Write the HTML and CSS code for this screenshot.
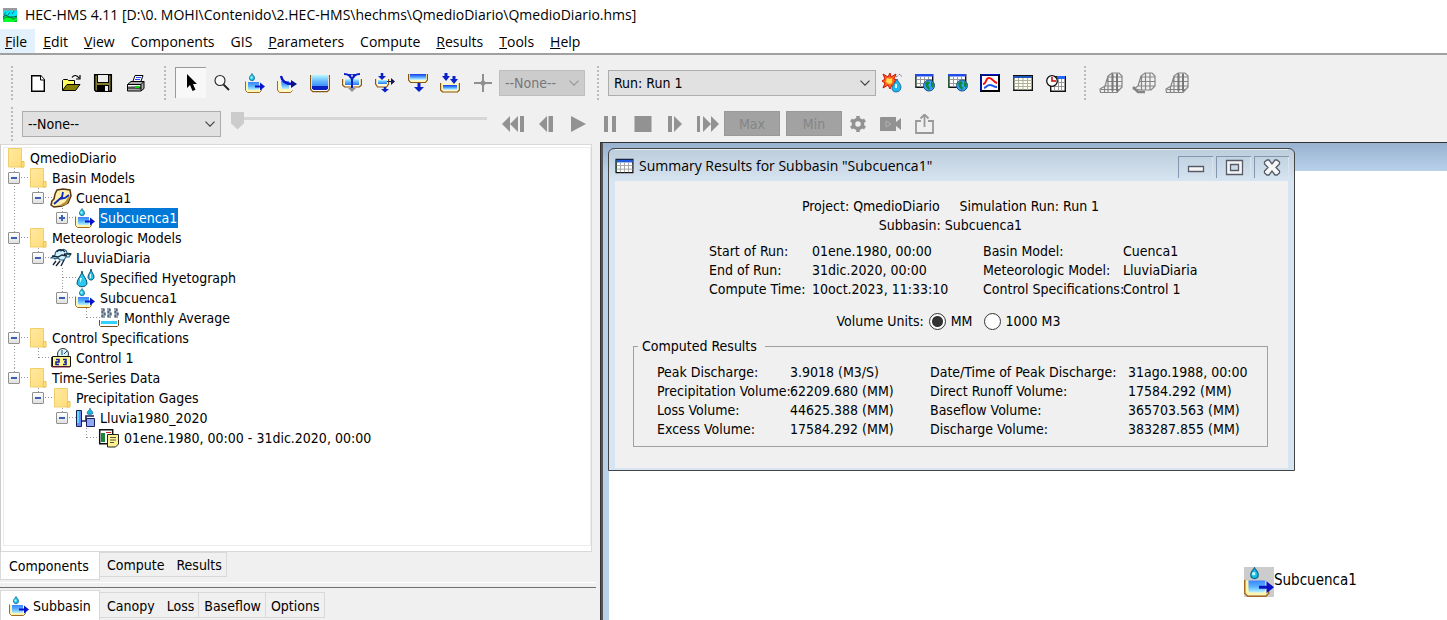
FILE: index.html
```html
<!DOCTYPE html>
<html lang="en">
<head>
<meta charset="utf-8">
<title>HEC-HMS 4.11</title>
<link rel="stylesheet" href="styles.css">
</head>
<body>
<svg class="sprite" aria-hidden="true">
  <defs>
    <linearGradient id="water" x1="0" y1="0" x2="0" y2="1"><stop offset="0" stop-color="#b8f8ff"/><stop offset=".5" stop-color="#5ab0ff"/><stop offset="1" stop-color="#2a7af8"/></linearGradient>
    <linearGradient id="deep" x1="0" y1="0" x2="0" y2="1"><stop offset="0" stop-color="#1838e8"/><stop offset=".5" stop-color="#4aa0ff"/><stop offset="1" stop-color="#d8fcff"/></linearGradient>
    <linearGradient id="basin-water" x1="0" y1="0" x2="0" y2="1"><stop offset="0" stop-color="#3a86ff"/><stop offset=".5" stop-color="#58b0ff"/><stop offset="1" stop-color="#b8f4ff"/></linearGradient>
    <linearGradient id="paper" x1="0" y1="0" x2="1" y2="1"><stop offset="0" stop-color="#ffe9a0"/><stop offset="1" stop-color="#ffdc78"/></linearGradient>
  </defs>
  <symbol id="logo" viewBox="0 0 14 14"><path fill="#00e8f8" d="M0 0h14v14H0z"/><path fill="#9a9a9a" d="M0 0h14v2l-3 1-3-1-3 1-5-1z"/><path stroke="#177" d="M3 4 1 7M7 4 5 7M11 3 9 6"/><path fill="#0b2" d="M0 10 3 8l4 1 4 1 3-2v6H0z"/><path stroke="#053" fill="none" d="M0 9l3-2 3 2h5l3-1"/><path fill="#0f3" d="M3 10h4l3 2 4-2v2l-4 2H0v-2z"/></symbol>
  <symbol id="new" viewBox="0 0 20 20"><path fill="#fff" stroke="#000" stroke-width="1.400" d="M3.700 2.700h9l3.600 4v11.600H3.700z"/><path fill="#fff" stroke="#000" d="M12.500 2.500v4.500h4"/></symbol>
  <symbol id="open" viewBox="0 0 20 20"><path fill="#ffff60" stroke="#000" d="M1.500 17V7.500l1-1h4l1 1h6V11"/><path fill="#888000" stroke="#000" d="M1.500 17.500 6 11.500h13l-4.500 6z"/><path fill="none" stroke="#000" stroke-width="1.200" d="M11 4.500c2-3 5-2.500 7 .5M19 2v4h-4"/></symbol>
  <symbol id="save" viewBox="0 0 20 20"><path fill="#807c30" stroke="#000" stroke-width="1.500" d="M1.700 1.700h16.600v16.600H3l-1.300-1.300z"/><path fill="#000" d="M4 2h12v8H4zM4 12h12v7H4z"/><path fill="#eee" d="M5 2h10v7H5zM12 13h3v5h-3z"/></symbol>
  <symbol id="print" viewBox="0 0 20 20"><path fill="#fff" stroke="#000" d="M6.500 9.500 9 2.500h8l-2.500 7z"/><path stroke="#24f" d="M10 4.500h5M9 6.500h5"/><path fill="#aaa" stroke="#000" d="M1.500 11.500 5 8.500h13v7l-3 2.500H1.500z"/><path stroke="#000" d="M1.500 11.500H15v6.500M15 11.500l3-3M2 15h13"/><path fill="#fff" d="M2 12h12v1H2z"/><path fill="#0d0" d="M9 13h4v2H9z"/></symbol>
  <symbol id="pointer" viewBox="0 0 20 20"><path d="M6 1v14l3-3 2.500 6 3-1.200-2.500-5.800h4z"/></symbol>
  <symbol id="zoom" viewBox="0 0 20 20"><circle cx="8" cy="7.500" r="5" fill="#f8f8f8" stroke="#222" stroke-width="1.100"/><path stroke="#222" stroke-width="1.800" d="m11.500 11.500 5.500 5.500"/></symbol>
  <symbol id="basin" viewBox="0 0 20 20"><path fill="#fff4b0" d="M0 9h3l1 7h10l1-2h2v3l-2 2H2l-2-2z"/><path fill="none" stroke="#a06a20" d="M.5 8.500v9l2 2h12l2-2V15"/><path fill="url(#basin-water)" d="M3 9h11v7l-1 1H4l-1-1z"/><path fill="#10c0e8" stroke="#1a6a90" stroke-width=".8" d="M7 .5c1 2 2.500 2.500 2.500 4.500S8.500 7.700 7 7.700 4.500 7 4.500 5 6 2.500 7 .5z"/><path fill="#c8ffff" d="M5.500 3.500h2v2h-2z"/><path fill="#0a12c8" d="M10 12.500h5v-3l5 4-5 4v-3h-5z"/></symbol>
  <symbol id="reach" viewBox="0 0 20 20"><path fill="#fff8c0" d="M0 8h3l1 8h8l3-2v4l-2 1H2l-2-2z"/><path fill="none" stroke="#a06a20" d="M.5 8v9l2 2.500h11l2-2"/><path fill="url(#basin-water)" d="M4 8h8v8H5z"/><path fill="none" stroke="#0a12c8" stroke-width="2.400" d="M4 3c1 5 5 8 11 8"/><path fill="#0a1280" d="m14 7 6 4-6 4z"/></symbol>
  <symbol id="reservoir" viewBox="0 0 20 20"><path fill="#fff" stroke="#8a5410" stroke-width="1.200" d="M.6 2v14.500l2.200 2.200h14.400l2.200-2.200V2"/><path fill="url(#water)" d="M2 2h16v14H2z"/><path fill="#0a20c0" d="M2 13h16v2.500L16.500 17h-13L2 15.500z"/></symbol>
  <symbol id="junction" viewBox="0 0 20 20"><path fill="#fffbd8" stroke="#8a5410" stroke-width="1.200" d="M.6 6v6l2 2h14.800l2-2V6"/><path fill="url(#water)" d="M3 6h14v6H3z"/><path stroke="#0a20c8" stroke-width="2" fill="none" d="M2 1c4 0 7 2 8 6 1-4 4-6 8-6M10 6v10"/><path fill="#0a20c8" d="M5 1h5L8 5zM15 1h-5l2 4z"/><path d="M6 15h8l-4 4z"/></symbol>
  <symbol id="diversion" viewBox="0 0 20 20"><path fill="#fffbd8" stroke="#8a5410" stroke-width="1.200" d="M.6 6v5l2 3h9l2-3V6"/><path fill="url(#water)" d="M3 7h9v4H3z"/><path stroke="#0a20c8" stroke-width="2.500" d="M7 0v4M10 14v3"/><path fill="#0a20c8" d="M3 3h8L7 7zM6 16h8l-4 3.500z"/><path d="M12 8h4V5l4 3.500-4 3.500v-3h-4z" fill="#111850"/></symbol>
  <symbol id="source" viewBox="0 0 20 20"><path fill="#fff8c0" stroke="#8a5410" stroke-width="1.200" d="M.6 1v6l2 2.500h14.800l2-2.500V1"/><path fill="url(#deep)" d="M2 1h16v6H2z"/><path stroke="#0a20c8" stroke-width="3" d="M11 10v5"/><path fill="#0a20c8" d="M6 14h10l-5 5z"/></symbol>
  <symbol id="sink" viewBox="0 0 20 20"><path fill="#fff8c0" stroke="#8a5410" stroke-width="1.200" d="M.6 10v7l2 2h14.800l2-2v-7"/><path fill="url(#deep)" d="M3 12h14v5H3z"/><path stroke="#0a20c8" stroke-width="3" d="M6 0v4M14 3v4"/><path fill="#0a20c8" d="M2 3h8L6 8zM10 6h8l-4 5z"/></symbol>
  <symbol id="cross" viewBox="0 0 20 20"><path fill="#909090" d="M9 1h2v7l1 1h7v2h-7l-1 1v7H9v-7l-1-1H1V9h7l1-1z"/><circle cx="10" cy="10" r="2.500" fill="#909090"/></symbol>
  <symbol id="burst" viewBox="0 0 20 20"><path fill="#ff6a18" stroke="#d01008" d="m1 1 5 3 2-4 1 4 5-3-2 5 3 1-3 2 2 4-4-1-2 4-2-4-5 3 2-5-3-2 3-2z"/><path fill="#ffe050" d="m5 5 3 1 2-1v5l-3 1-3-2z"/><path fill="#20b8f0" stroke="#106090" stroke-width=".8" d="M15 6c1 3 4 5 4 8s-2 5-5 5-4-2-4-4 3-5 5-9z"/><path fill="#d8ffff" d="M13 11h2v4h-2z"/><path fill="none" stroke="#557" stroke-dasharray="1 1" d="m14 4 4-3 2 3"/></symbol>
  <symbol id="sheet" viewBox="0 0 20 20"><path fill="#fff" stroke="#101010" stroke-width="1.400" d="M.7 2.700h18.600v14.600H.7z"/><path fill="#2058e0" d="M1 3h18v3H1z"/><path stroke="#a0a0a0" d="M1 9.500h18M1 13.500h18M5.500 6v11M10 6v11M14.500 6v11" fill="none"/><path stroke="#285838" d="M.6 3v14"/></symbol>
  <symbol id="globe-sheet" viewBox="0 0 20 20"><path fill="#fff" stroke="#101018" stroke-width="1.400" d="M.7 1.700h17v12.600H.7z"/><path fill="#204ce8" d="M0 1h18v2.500H0z"/><path stroke="#9a9a9a" d="M2 6.500h15M2 10.500h15M5.500 4v10M9.500 4v10M13.500 4v10"/><path stroke="#285838" stroke-width="1.500" d="M.7 3v12"/><circle cx="14" cy="12.500" r="5.500" fill="#30a0ff" stroke="#205080"/><path fill="#108838" d="m10 10 3-2 2 2-2 2 2 3-1 2-3-3zM16 8l3 3-1 4-2-2z"/></symbol>
  <symbol id="graph" viewBox="0 0 20 20"><path fill="#fff" stroke="#000" stroke-width="2" d="M1 2h18v16H1z"/><path fill="none" stroke="#0018c8" stroke-width="1.500" d="M1 1.700h18M1 2v16"/><path fill="none" stroke="#f01010" stroke-width="2" d="M3 11c4 0 2-6 6-6 4 0 4 4 8 5"/><path fill="none" stroke="#2058f0" stroke-width="2" d="M4 15c4-1 2-3 6-3 3 0 3 2 7 2"/></symbol>
  <symbol id="table" viewBox="0 0 20 20"><path fill="#fffff0" stroke="#101010" stroke-width="1.400" d="M.7 2.700h18.600v14.600H.7z"/><path fill="#2058c0" d="M1 3h18v2H1z"/><path stroke="#b0b0a0" d="M1 7.500h18M1 10.500h18M1 13.500h18M5.500 5v12M10 5v12M14.500 5v12" fill="none"/><path stroke="#385838" d="M.6 3v14"/></symbol>
  <symbol id="clock-sheet" viewBox="0 0 20 20"><path fill="#fff" stroke="#111" stroke-width="1.400" d="M4.700 3.700h14.600v14.600H4.700z"/><path fill="#2468f0" d="M11 3h8v3h-8z"/><path stroke="#999" d="M5 9.500h14M5 13.500h14M8.500 9v9M12.500 6v12M15.500 6v12"/><circle cx="6" cy="8" r="5.300" fill="#fff" stroke="#111" stroke-width="1.300"/><path fill="none" stroke="#c00" stroke-width="1.500" d="M6 4v4h4"/></symbol>
  <symbol id="terrain" viewBox="0 0 24 22"><path fill="none" stroke="#858585" stroke-width="1.200" d="M1.500 20.500 1 17l5-3 3-10 4-3h7l3 3v11l-5 5.500zM8 5h15M7 9.500h16M6 14h17M2 17.500h18M9 4v16M13.500 1v19M18 1v19M5.500 14v6"/><path stroke="#777" stroke-width="2" d="M13.500 2v17M18 2v17"/></symbol>
  <symbol id="terrain-edit" viewBox="0 0 24 22"><path fill="none" stroke="#858585" stroke-width="1.200" d="M6 14 9 4l4-3h7l3 3v10l-4 4H9l-7-1zM8 5h15M7 9.500h16M6 14h17M9.500 4v14M13.500 1v17M18 1v17"/><path fill="none" stroke="#858585" stroke-width="2.500" d="m1 15 5 5h7"/></symbol>
  <symbol id="first" viewBox="0 0 24 20"><path d="M1 10 9 2v16zM9 10l8-8v16zM19 2h4v16h-4z"/></symbol>
  <symbol id="prev" viewBox="0 0 24 20"><path d="m5 10 8-8v16zM14.500 2H19v16h-4.500z"/></symbol>
  <symbol id="play" viewBox="0 0 24 20"><path d="m5 2 15 8-15 8z"/></symbol>
  <symbol id="pause" viewBox="0 0 24 20"><path d="M6 2h4v16H6zM14 2h4v16h-4z"/></symbol>
  <symbol id="stop" viewBox="0 0 24 20"><path d="M3.500 2h17v16h-17z"/></symbol>
  <symbol id="next" viewBox="0 0 24 20"><path d="M5 2h4v16H5zM11 2l8 8-8 8z"/></symbol>
  <symbol id="last" viewBox="0 0 24 20"><path d="M1 2h3v16H1zM7 2l8 8-8 8zM15 2l8 8-8 8z"/></symbol>
  <symbol id="gear" viewBox="0 0 24 20"><circle cx="12" cy="10" r="4.500" fill="none" stroke="#929292" stroke-width="3.500"/><path fill="none" stroke="#929292" stroke-width="3.500" d="M12 2v3M12 15v3M5 6l3 2M16 12l3 2M5 14l3-2M16 8l3-2"/></symbol>
  <symbol id="camera" viewBox="0 0 24 20"><path d="M1 4q0-1 1-1h15v5l5-4v12l-5-4v5H1z"/><path fill="none" stroke="#b0b0b0" d="m7 7 5 3-5 3z"/></symbol>
  <symbol id="share" viewBox="0 0 24 20"><path fill="none" stroke="#999" stroke-width="1.800" d="M9 7H4v12h17V7h-5M12.500 13V1M8.500 4.500l4-4 4 4"/></symbol>
  <symbol id="folder" viewBox="0 0 22 20"><path fill="url(#paper)" stroke="#f0cf6a" d="M4.500.5h13v13h2v5.500h-15z"/><path fill="#ffdf80" stroke="#eac250" d="M17.500 13.500h2.500V19h-3z"/></symbol>
  <symbol id="map" viewBox="0 0 22 20"><path fill="#fff0b0" stroke="#5a3408" stroke-width="1.500" d="m7 2 6-1 7 1 1 6-3 7-6 3-8 1-3-2 1-4 2-2 1-5z"/><path fill="#b8903c" d="m10 17 5-3 4-6 1 1-3 7-5 2z"/><path fill="none" stroke="#1028b8" stroke-width="1.800" d="m4 16 8-7 1-5M9 11l6-1 4-3"/></symbol>
  <symbol id="cloud" viewBox="0 0 22 20"><path fill="#d0f0ff" stroke="#246080" stroke-width="1.200" d="M4 10H1l4-3c0-4 3-6 6-4 2-3 6-1 6 2l4 1-2 3h-3l-2 3h-4l-2-2-3 1z"/><path fill="none" stroke="#142838" stroke-width="1.300" d="M7 4c1-3 6-3 8 0M2 8l6 1 4-2 5 1M14 6l7 0"/><path stroke="#142838" stroke-width="1.400" d="m6 13-3 4M10 13l-4 5M14 12l-3 6"/></symbol>
  <symbol id="drops" viewBox="0 0 22 20"><path fill="#28c8f0" stroke="#0a5070" d="M8 3c0 4 5 8 5 12 0 5-10 5-10 0 0-4 5-8 5-12zM17 1c0 3 3 5 3 8 0 4-6 4-6 0 0-3 3-5 3-8z"/><path fill="#d8ffff" d="M6 10h2l-2 5zM16 6h1v4h-1z"/></symbol>
  <symbol id="evap" viewBox="0 0 22 20"><path fill="none" stroke="#244060" stroke-width="1.200" d="M3 1h3v2H4v2h3v2H4v2h3M9 1h3v2h-2v2h3v2h-3v2h3M16 1h3v2h-2v2h3v2h-3v2h3"/><path fill="#fff" stroke="#76501c" d="M1.500 12v5.500l1 1h17l1-1V12"/><path fill="#30d0ff" d="M3 13h16v3H3z"/></symbol>
  <symbol id="control" viewBox="0 0 22 20"><circle cx="13" cy="6" r="5.500" fill="#d8f4f8" stroke="#333"/><path fill="none" stroke="#246" d="M12 2v5M14 6l3-3"/><path fill="#fff390" stroke="#111" d="M2.500 8.500h18v10h-18z"/><path stroke="#824" d="M2 19h18M1.500 9v10"/><path fill="none" stroke="#1020a0" stroke-width="1.500" d="M6 11.500h3V14H6v2.500h3M13 11.500h3V14h-2 2v2.500h-3"/></symbol>
  <symbol id="gage" viewBox="0 0 22 20"><path fill="#7088f0" stroke="#182058" d="M2.500 2.500h5v16h-5z"/><path fill="#60d8ff" d="M3 3h2v12H3z"/><path fill="none" stroke="#182058" stroke-width="1.600" d="M7 13h5V8h8"/><path fill="#90a8f8" stroke="#182058" d="M12.500 10.500h8v8h-8z"/><path fill="#18b0e0" stroke="#146" stroke-width=".5" d="M16 0c0 2 3 3 3 5s-6 2-6 0 3-3 3-5z"/></symbol>
  <symbol id="series" viewBox="0 0 22 20"><path fill="#fff" stroke="#111" stroke-width="1.500" d="M1.700 1.700h13v14h-13z"/><path fill="#188838" d="M3 5h4v9H3z"/><path stroke="#c22" d="M8 4.500h5"/><path fill="#fff490" stroke="#222" d="M9.500 6.500h11V16l-3 3h-8z"/><path stroke="#554" d="M12 9.500h6M12 12h6M12 14.500h4"/></symbol>
  <symbol id="chevron" viewBox="0 0 10 6"><path fill="none" stroke="currentColor" stroke-width="1.200" d="m.5.7 4.500 4.500L9.500.7"/></symbol>
</svg>

<header class="title-bar"><svg class="logo"><use href="#logo"/></svg><h1>HEC-HMS 4.11 [D:\0. MOHI\Contenido\2.HEC-HMS\hechms\QmedioDiario\QmedioDiario.hms]</h1></header>
<nav class="menu-bar">
  <button class="active"><u>F</u>ile</button><button><u>E</u>dit</button><button><u>V</u>iew</button><button>Components</button><button>GIS</button><button><u>P</u>arameters</button><button>Compute</button><button><u>R</u>esults</button><button><u>T</u>ools</button><button><u>H</u>elp</button>
</nav>

<div class="toolbars">
  <div class="toolbar" role="toolbar" aria-label="Tools">
    <span class="grip"></span>
    <div class="tools four">
      <button aria-label="New"><svg><use href="#new"/></svg></button>
      <button aria-label="Open"><svg><use href="#open"/></svg></button>
      <button aria-label="Save"><svg><use href="#save"/></svg></button>
      <button aria-label="Print"><svg><use href="#print"/></svg></button>
    </div>
    <span class="grip"></span>
    <button class="pressed" aria-label="Select" aria-pressed="true"><svg><use href="#pointer"/></svg></button>
    <div class="tools nine">
      <button aria-label="Zoom"><svg><use href="#zoom"/></svg></button>
      <button aria-label="Subbasin"><svg><use href="#basin"/></svg></button>
      <button aria-label="Reach"><svg><use href="#reach"/></svg></button>
      <button aria-label="Reservoir"><svg><use href="#reservoir"/></svg></button>
      <button aria-label="Junction"><svg><use href="#junction"/></svg></button>
      <button aria-label="Diversion"><svg><use href="#diversion"/></svg></button>
      <button aria-label="Source"><svg><use href="#source"/></svg></button>
      <button aria-label="Sink"><svg><use href="#sink"/></svg></button>
      <button aria-label="Add point" disabled><svg><use href="#cross"/></svg></button>
    </div>
    <span class="combo small"><select aria-label="Layer" disabled><option>--None--</option></select><svg><use href="#chevron"/></svg></span>
    <span class="grip"></span>
    <span class="combo run"><select aria-label="Simulation"><option>Run: Run 1</option></select><svg><use href="#chevron"/></svg></span>
    <div class="tools six">
      <button aria-label="Compute"><svg><use href="#burst"/></svg></button>
      <button aria-label="Global summary"><svg><use href="#globe-sheet"/></svg></button>
      <button aria-label="Global table"><svg><use href="#globe-sheet"/></svg></button>
      <button aria-label="Graph"><svg><use href="#graph"/></svg></button>
      <button aria-label="Summary table"><svg><use href="#table"/></svg></button>
      <button aria-label="Time-series table"><svg><use href="#clock-sheet"/></svg></button>
    </div>
    <span class="grip"></span>
    <div class="tools three terrain">
      <button aria-label="Terrain" disabled><svg><use href="#terrain"/></svg></button>
      <button aria-label="Edit terrain" disabled><svg><use href="#terrain-edit"/></svg></button>
      <button aria-label="Terrain view" disabled><svg><use href="#terrain"/></svg></button>
    </div>
  </div>
  <div class="toolbar second" role="toolbar" aria-label="Animation">
    <span class="grip"></span>
    <span class="combo result"><select aria-label="Result"><option>--None--</option></select><svg><use href="#chevron"/></svg></span>
    <input class="slider" type="range" value="0" disabled aria-label="Time">
    <div class="tools seven wide">
      <button aria-label="First" disabled><svg><use href="#first"/></svg></button>
      <button aria-label="Previous" disabled><svg><use href="#prev"/></svg></button>
      <button aria-label="Play" disabled><svg><use href="#play"/></svg></button>
      <button aria-label="Pause" disabled><svg><use href="#pause"/></svg></button>
      <button aria-label="Stop" disabled><svg><use href="#stop"/></svg></button>
      <button aria-label="Next" disabled><svg><use href="#next"/></svg></button>
      <button aria-label="Last" disabled><svg><use href="#last"/></svg></button>
    </div>
    <button class="limit" disabled>Max</button><button class="limit" disabled>Min</button>
    <div class="tools three wide">
      <button aria-label="Settings" disabled><svg><use href="#gear"/></svg></button>
      <button aria-label="Record" disabled><svg><use href="#camera"/></svg></button>
      <button aria-label="Export" disabled><svg><use href="#share"/></svg></button>
    </div>
  </div>
</div>

<main class="workspace">
  <section class="sidebar">
    <div class="explorer">
      <div class="tree">
        <div class="node root"><svg><use href="#folder"/></svg><span>QmedioDiario</span></div>
        <ul>
          <li><div class="node"><button class="toggle" aria-label="Collapse"></button><svg><use href="#folder"/></svg><span>Basin Models</span></div>
            <ul><li><div class="node"><button class="toggle" aria-label="Collapse"></button><svg><use href="#map"/></svg><span>Cuenca1</span></div>
              <ul><li><div class="node"><button class="toggle plus" aria-label="Expand"></button><svg><use href="#basin"/></svg><span class="selected">Subcuenca1</span></div></li></ul></li></ul></li>
          <li><div class="node"><button class="toggle" aria-label="Collapse"></button><svg><use href="#folder"/></svg><span>Meteorologic Models</span></div>
            <ul><li><div class="node"><button class="toggle" aria-label="Collapse"></button><svg><use href="#cloud"/></svg><span>LluviaDiaria</span></div>
              <ul>
                <li><div class="node leaf"><svg><use href="#drops"/></svg><span>Specified Hyetograph</span></div></li>
                <li><div class="node"><button class="toggle" aria-label="Collapse"></button><svg><use href="#basin"/></svg><span>Subcuenca1</span></div>
                  <ul><li><div class="node leaf"><svg><use href="#evap"/></svg><span>Monthly Average</span></div></li></ul></li>
              </ul></li></ul></li>
          <li><div class="node"><button class="toggle" aria-label="Collapse"></button><svg><use href="#folder"/></svg><span>Control Specifications</span></div>
            <ul><li><div class="node leaf"><svg><use href="#control"/></svg><span>Control 1</span></div></li></ul></li>
          <li><div class="node"><button class="toggle" aria-label="Collapse"></button><svg><use href="#folder"/></svg><span>Time-Series Data</span></div>
            <ul><li><div class="node"><button class="toggle" aria-label="Collapse"></button><svg><use href="#folder"/></svg><span>Precipitation Gages</span></div>
              <ul><li><div class="node"><button class="toggle" aria-label="Collapse"></button><svg><use href="#gage"/></svg><span>Lluvia1980_2020</span></div>
                <ul><li><div class="node leaf"><svg><use href="#series"/></svg><span>01ene.1980, 00:00 - 31dic.2020, 00:00</span></div></li></ul></li></ul></li></ul></li>
        </ul>
      </div>
    </div>
    <div class="tabs lower"><button class="tab current">Components</button><button class="tab">Compute</button><button class="tab end">Results</button></div>
    <div class="splitter"></div>
    <div class="tabs upper"><button class="tab current"><svg><use href="#basin"/></svg>Subbasin</button><button class="tab">Canopy</button><button class="tab end">Loss</button><button class="tab end">Baseflow</button><button class="tab end">Options</button></div>
  </section>

  <section class="desktop">
    <div class="map-window"><div class="map-title"></div><div class="map-canvas"></div></div>
    <div class="map-element"><svg><use href="#basin"/></svg><span>Subcuenca1</span></div>
    <article class="dialog">
      <header class="dialog-title">
        <svg class="dialog-icon"><use href="#sheet"/></svg>
        <h2>Summary Results for Subbasin "Subcuenca1"</h2>
        <div class="window-buttons">
          <button aria-label="Minimize"><svg viewBox="0 0 34 21"><path d="M9.500 9.500h15v5h-15z"/></svg></button>
          <button aria-label="Maximize"><svg viewBox="0 0 34 21"><path fill-rule="evenodd" d="M9.500 3.500h16v14h-16zM13.500 7.500h8v6h-8z"/></svg></button>
          <button aria-label="Close"><svg viewBox="0 0 34 21"><path d="m9.500 5 2.500-2h2l3 4 3-4h2l2.500 2v2l-3.500 3.500 3.500 3.500v2l-2.500 2h-2l-3-4-3 4h-2l-2.500-2v-2l3.500-3.500L9.500 7z"/></svg></button>
        </div>
      </header>
      <div class="dialog-body">
        <div class="headline"><p><span>Project: QmedioDiario</span><span>Simulation Run: Run 1</span></p><p>Subbasin: Subcuenca1</p></div>
        <dl class="facts run-facts">
          <dt>Start of Run:</dt><dd>01ene.1980, 00:00</dd><dt>Basin Model:</dt><dd>Cuenca1</dd>
          <dt>End of Run:</dt><dd>31dic.2020, 00:00</dd><dt>Meteorologic Model:</dt><dd>LluviaDiaria</dd>
          <dt>Compute Time:</dt><dd>10oct.2023, 11:33:10</dd><dt>Control Specifications:</dt><dd>Control 1</dd>
        </dl>
        <div class="units" role="radiogroup" aria-labelledby="units-label"><span id="units-label">Volume Units:</span><label><input type="radio" name="units" checked>MM</label><label><input type="radio" name="units">1000 M3</label></div>
        <fieldset>
          <legend>Computed Results</legend>
          <dl class="facts result-facts">
            <dt>Peak Discharge:</dt><dd>3.9018 (M3/S)</dd><dt>Date/Time of Peak Discharge:</dt><dd>31ago.1988, 00:00</dd>
            <dt>Precipitation Volume:</dt><dd>62209.680 (MM)</dd><dt>Direct Runoff Volume:</dt><dd>17584.292 (MM)</dd>
            <dt>Loss Volume:</dt><dd>44625.388 (MM)</dd><dt>Baseflow Volume:</dt><dd>365703.563 (MM)</dd>
            <dt>Excess Volume:</dt><dd>17584.292 (MM)</dd><dt>Discharge Volume:</dt><dd>383287.855 (MM)</dd>
          </dl>
        </fieldset>
      </div>
    </article>
  </section>
</main>
</body>
</html>
```
FILE: styles.css
```css
* { box-sizing: border-box; }
body {
  margin: 0;
  min-height: 100vh;
  display: flex;
  flex-direction: column;
  overflow: hidden;
  background: #f0f0f0;
  color: #000;
  font: 14px/20px "DejaVu Sans Condensed", "Open Sans", sans-serif;
  white-space: nowrap;
}
button, select, input { font: inherit; color: inherit; margin: 0; }
button { background: none; border: 0; padding: 0; }
h1, h2, p, ul, dl, dd { margin: 0; padding: 0; }
ul { list-style: none; }
.sprite { position: absolute; width: 0; height: 0; }

.title-bar { display: flex; align-items: center; gap: 8px; height: 29px; padding: 0 3px; background: #fff; }
.title-bar h1 { font: 400 14px/20px "Open Sans", sans-serif; }
.logo { width: 14px; height: 14px; }

.menu-bar { display: flex; height: 26px; background: #fff; border-bottom: 2px solid #a0a0a0; }
.menu-bar button { padding: 1px 8px 0; font-family: "Open Sans", sans-serif; font-weight: 500; }
.menu-bar .active { padding-left: 5px; background: #e3f1fd; }

.toolbars { display: flex; flex-direction: column; height: 87px; padding-left: 10px; }
.toolbar { display: flex; align-items: center; height: 55px; }
.toolbar.second { height: 32px; padding-bottom: 5px; }
.grip { width: 2px; height: 34px; margin: 0 9px 0 1px; background: repeating-linear-gradient(#bbb 0 2px, transparent 2px 4px); }
.tools + .grip { margin-left: 12px; }
.combo + .grip { margin-left: 12px; }
.tools { display: grid; grid-auto-flow: column; grid-auto-columns: 1fr; }
.tools button { display: flex; justify-content: center; }
.tools svg, .pressed svg { width: 20px; height: 20px; fill: #929292; }
.tools.wide svg { width: 24px; }
.tools.terrain svg { width: 24px; height: 22px; }
.four { width: 130px; }
.nine { width: 293px; }
.six { width: 196px; }
.three { width: 98px; }
.seven { width: 227px; }
.pressed { display: flex; justify-content: center; align-items: center; width: 31px; height: 31px; background: #f8f8f8; border: solid #999; border-width: 1px 0 0 1px; }
.pressed svg { fill: #000; }
.combo { position: relative; height: 26px; }
.combo select { width: 100%; height: 100%; padding: 0 5px; appearance: none; border: 1px solid #adadad; border-radius: 0; background: #e1e1e1; opacity: 1; }
.combo svg { position: absolute; right: 6px; top: 10px; width: 10px; height: 6px; color: #444; pointer-events: none; }
.combo select:disabled { background: #ccc; border-color: #bfbfbf; color: #777; }
.combo.small { width: 86px; }
.combo.small svg { color: #999; }
.combo.run { width: 268px; }
.combo.result { width: 199px; }
.slider { appearance: none; width: 256px; height: 20px; margin: 0 10px 6px; background: linear-gradient(#d6d6d6, #d6d6d6) 0 6px / 100% 3px no-repeat; }
.slider::-webkit-slider-thumb { appearance: none; width: 13px; height: 18px; background: #ccc; clip-path: polygon(0 0, 100% 0, 100% 65%, 50% 100%, 0 65%); }
.limit { width: 56px; height: 25px; margin-right: 6px; background: #a2a2a2; border: 1px solid #999; color: #858585; }
.limit + .limit { margin-right: 0; }

.workspace { display: flex; flex: 1; }
.sidebar { display: flex; flex-direction: column; flex: 0 0 600px; }
.explorer { flex: 1; width: 592px; margin-top: 2px; padding: 2px 0 5px 2px; background: #fff; border: 1px solid #d9d9d9; border-left-color: #ccc; }
.tree { height: 100%; border: 1px solid #ececec; }
.tree > ul { margin-left: 3px; }
.tree li { background: repeating-linear-gradient(#999 0 1px, transparent 1px 3px) 7px 0 / 1px 100% no-repeat; }
.tree li:last-child { background-size: 1px 10px; }
.tree li ul { margin-left: 24px; }
.node { display: flex; align-items: center; height: 20px; padding-left: 1px; background: repeating-linear-gradient(90deg, #999 0 1px, transparent 1px 3px) 8px 9px / 14px 1px no-repeat; }
.node svg { flex: none; width: 22px; height: 20px; }
.node span { margin-left: 3px; padding: 0 1px; line-height: 20px; }
.node.root { padding: 0; background: none; }
.node.leaf { padding-left: 19px; }
.node .selected { background: #0078d7; color: #fff; }
.toggle { width: 12px; height: 12px; margin-right: 6px; border: 1px solid #919191; border-radius: 1px; background: linear-gradient(#3f5fb0, #3f5fb0) center / 6px 2px no-repeat, linear-gradient(#fff, #e0e0e0); }
.toggle.plus { background: linear-gradient(#3f5fb0, #3f5fb0) center / 6px 2px no-repeat, linear-gradient(#3f5fb0, #3f5fb0) center / 2px 6px no-repeat, linear-gradient(#fff, #e0e0e0); }

.tabs { display: flex; align-items: flex-start; }
.tab { height: 25px; padding: 0 7px; border: solid #d9d9d9; border-width: 1px 0; }
.tab.end { padding: 0 4px 0 5px; border-right-width: 1px; }
.tab.current { display: flex; align-items: center; gap: 4px; width: 100px; height: 28px; padding: 0 8px; background: #fff; border-width: 0 1px 1px; }
.tab svg { width: 20px; height: 20px; }
.splitter { width: 596px; height: 8px; margin-top: 2px; border-top: 1px solid #fff; background: linear-gradient(#707070, #707070) 0 4px / 100% 1px no-repeat; }
.upper { align-items: flex-end; height: 30px; }
.upper .current { height: 30px; border-width: 1px 1px 0 1px; }
.upper .tab:not(.current) { height: 26px; margin-bottom: 2px; padding-top: 2px; }

.desktop { position: relative; flex: 1; min-width: 0; border: solid #333; border-width: 1px 0 0 1px; }
.map-window { height: 100%; display: flex; flex-direction: column; background: linear-gradient(#98b1cf, #b9d1ea 28px); padding-left: 6px; border-left: 2px solid #555; }
.map-title { height: 28px; }
.map-canvas { flex: 1; background: #fff; }
.map-element { position: absolute; left: 643px; top: 424px; display: flex; font-size: 15px; line-height: 26px; }
.map-element svg { width: 30px; height: 30px; background: #ccc; }

.dialog { position: absolute; left: 7px; top: 5px; width: 687px; padding: 0 6px 2px; border: 1px solid #444; border-radius: 6px 6px 0 0; background: linear-gradient(#bccddb, #d7e4f1 32px); }
.dialog-title { display: flex; align-items: center; height: 32px; border-top: 1px solid #e8f0f6; }
.dialog-icon { width: 19px; height: 18px; margin-right: 5px; }
.dialog h2 { flex: 1; font: 500 14px/20px "Open Sans", sans-serif; }
.window-buttons { display: flex; gap: 3px; margin: 2px -1px 0 0; }
.window-buttons button { width: 35px; height: 22px; border: solid #8496b0; border-width: 1px 0 0 1px; box-shadow: inset -1px -1px #d8e4f0; }
.window-buttons svg { display: block; width: 34px; height: 21px; fill: #f6f6f6; stroke: #555b68; stroke-width: 1.3; }
.dialog-body { padding: 16px 20px 21px 18px; background: #f0f0f0; }
.headline { text-align: center; line-height: 19px; }
.headline span + span { margin-left: 20px; }
.facts { display: grid; line-height: 19px; }
.run-facts { grid-template-columns: 103px 171px 140px 1fr; margin: 7px 0 0 76px; }
.units { display: flex; justify-content: center; align-items: center; gap: 5px; margin: 12px 0 5px; padding-right: 4px; }
.units label { display: flex; align-items: center; gap: 5px; }
.units label + label { margin-left: 6px; }
.units input { appearance: none; width: 17px; height: 17px; border: 1px solid #333; border-radius: 50%; background: #fff; }
.units input:checked { background: radial-gradient(#333 0 5px, #fff 6px); }
fieldset { margin: 0; padding: 7px 15px 7px 23px; border: 1px solid #a0a0a0; min-width: 0; }
legend { margin-left: -19px; padding: 0 8px 0 4px; line-height: 20px; }
.result-facts { grid-template-columns: 133px 140px 198px 1fr; }
```
